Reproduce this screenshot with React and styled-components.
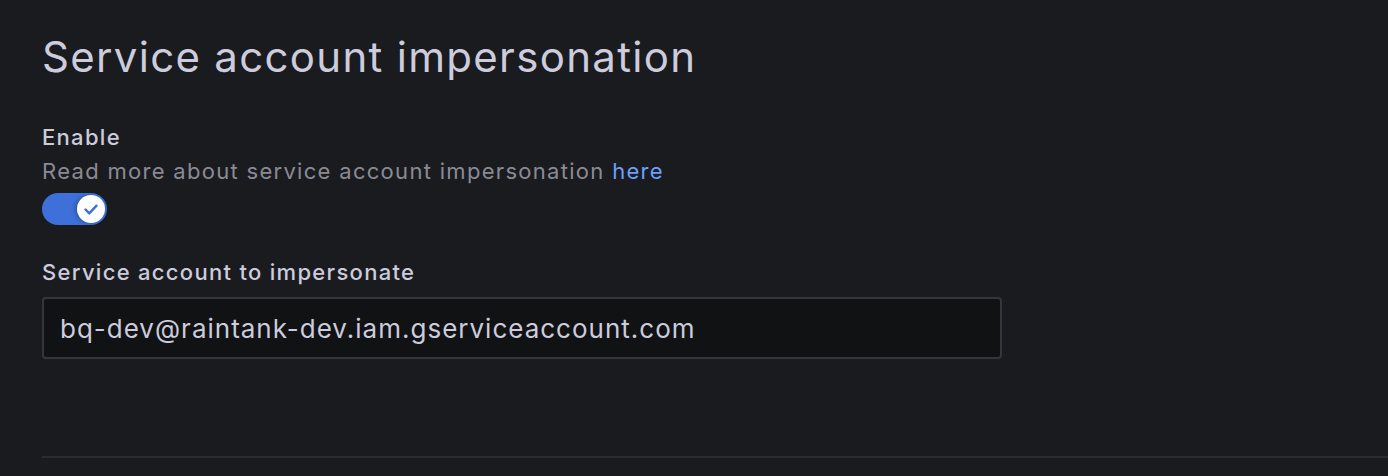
import React from 'react'
import styled, { createGlobalStyle } from 'styled-components'

const GlobalStyle = createGlobalStyle`
    html, body {
        margin: 0;
        padding: 0;
        background: #1a1b1e;
    }
    body {
        font-family: Inter, "Noto Sans", sans-serif;
        color: #ccccdc;
        -webkit-font-smoothing: antialiased;
    }
`

function Switch({ checked }) {
    return (
        <Track checked={checked}>
            <Knob checked={checked}>
                {checked && (
                    <svg width="20" height="20" viewBox="0 0 20 20" fill="none">
                        <path d="M4.5 10.5l3.8 3.8 7.2-7.6" stroke="#3d71d9" strokeWidth="2.4" strokeLinecap="round" strokeLinejoin="round" />
                    </svg>
                )}
            </Knob>
        </Track>
    )
}

function App() {
    return (
        <>
            <GlobalStyle />
            <Page>
                <Title>Service account impersonation</Title>
                <Field>
                    <Label>Enable</Label>
                    <Description>
                        Read more about service account impersonation <Link href="#">here</Link>
                    </Description>
                    <Switch checked />
                </Field>
                <Field spaced>
                    <Label>Service account to impersonate</Label>
                    <Input defaultValue="bq-dev@raintank-dev.iam.gserviceaccount.com" />
                </Field>
                <Divider />
            </Page>
        </>
    )
}

const Page = styled.div`
    padding: 32px 0 0 42px;
    height: 476px;
    box-sizing: border-box;
    overflow: hidden;
`

const Title = styled.h2`
    margin: 0;
    font-size: 42px;
    line-height: 50px;
    font-weight: 400;
    color: #ccccdc;
    letter-spacing: 1.3px;
`

const Field = styled.div`
    display: flex;
    flex-direction: column;
    align-items: flex-start;
    margin-top: ${p => p.spaced ? '33px' : '41px'};
`

const Label = styled.div`
    font-size: 22px;
    line-height: 28px;
    font-weight: 500;
    color: #ccccdc;
    letter-spacing: 1.3px;
`

const Description = styled.div`
    margin-top: 6px;
    font-size: 22px;
    line-height: 28px;
    font-weight: 400;
    color: rgba(204, 204, 220, 0.65);
    letter-spacing: 1.3px;
`

const Link = styled.a`
    color: #6e9fff;
    text-decoration: none;
`

const Track = styled.div`
    margin-top: 8px;
    width: 65px;
    height: 32px;
    border-radius: 16px;
    background: ${p => p.checked ? '#3d71d9' : '#2c3235'};
    box-sizing: border-box;
    display: flex;
    align-items: center;
    justify-content: ${p => p.checked ? 'flex-end' : 'flex-start'};
    padding: 0 2px;
`

const Knob = styled.div`
    width: 28px;
    height: 28px;
    border-radius: 50%;
    background: #ffffff;
    box-shadow: -2px 0 4px rgba(0, 0, 0, 0.25);
    display: flex;
    align-items: center;
    justify-content: center;
`

const Input = styled.input`
    margin-top: 11px;
    width: 960px;
    height: 62px;
    box-sizing: border-box;
    padding: 0 16px;
    background: #111214;
    border: 2px solid #34363b;
    border-radius: 4px;
    color: #ccccdc;
    font-family: Inter, "Noto Sans", sans-serif;
    font-size: 26px;
    letter-spacing: 1px;
    outline: none;
`

const Divider = styled.hr`
    margin: 97px 0 0 0;
    border: none;
    height: 2px;
    background: #2a2c30;
`

export default App
